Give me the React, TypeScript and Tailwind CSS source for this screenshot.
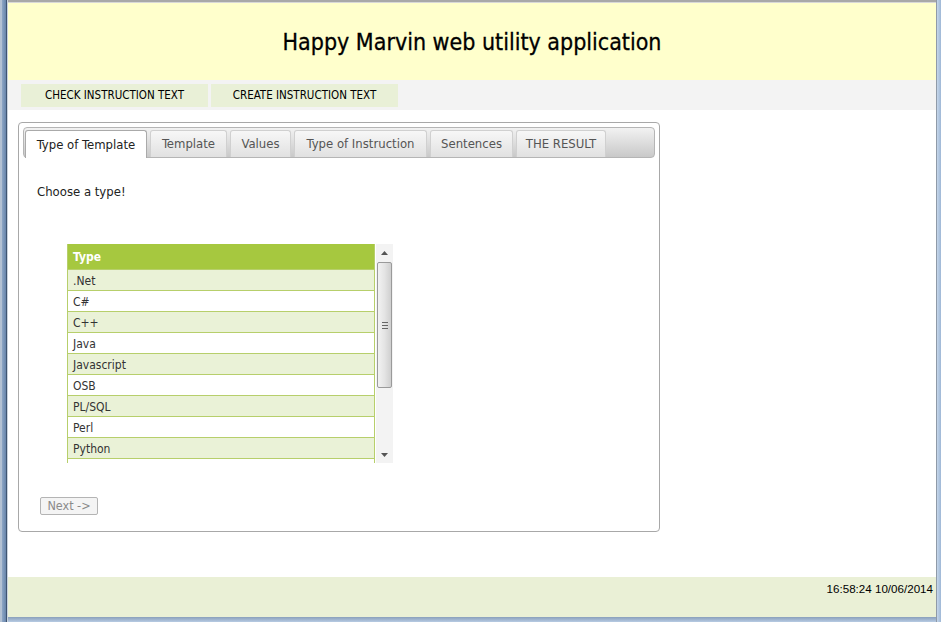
import React from "react";

const types = [".Net", "C#", "C++", "Java", "Javascript", "OSB", "PL/SQL", "Perl", "Python", ""];
const tabs: [string, string][] = [
  ["Type of Template", "w-[122px]"],
  ["Template", "w-[77px]"],
  ["Values", "w-[61px]"],
  ["Type of Instruction", "w-[133px]"],
  ["Sentences", "w-[83px]"],
  ["THE RESULT", "w-[90px]"],
];

export default function App() {
  return (
    <div className="w-[941px] h-[622px] flex overflow-hidden bg-[#a9c0dc] font-['DejaVu_Sans_Condensed','Liberation_Sans',sans-serif] text-[#222]">
      {/* left window frame */}
      <div className="w-[8px] flex">
        <div className="w-[2px] bg-[#b3c1d3]" />
        <div className="w-[4px] bg-gradient-to-r from-[#8ea7c6] to-[#6784aa]" />
        <div className="w-[1px] bg-[#3f5470]" />
        <div className="w-[1px] bg-[#c9d3df]" />
      </div>
      <div className="w-[928px] flex flex-col">
        <div className="h-[3px] bg-[#a8a8a8] border-b border-[#d8d8d8]" />
        <header className="h-[77px] bg-[#ffffcc] flex items-center justify-center text-[23px] text-black pt-[2px] [-webkit-text-stroke:0.3px_black]">
          Happy Marvin web utility application
        </header>
        <nav className="h-[30px] bg-[#f3f3f3] flex items-center pl-[13px] gap-[3px]">
          <div className="w-[187px] h-[23px] bg-[#e9f0d7] flex items-center justify-center text-[11.5px] text-black pt-[2px]">
            CHECK INSTRUCTION TEXT
          </div>
          <div className="w-[187px] h-[23px] bg-[#e9f0d7] flex items-center justify-center text-[11.5px] text-black pt-[2px]">
            CREATE INSTRUCTION TEXT
          </div>
        </nav>
        <main className="flex-1 bg-white pl-[10px] pt-[12px]">
          <div className="w-[642px] h-[410px] border border-[#a8a8a8] rounded-[4px] p-[4px] flex flex-col">
            <div className="h-[31px] rounded-[4px] border border-[#b5b5b5] bg-gradient-to-b from-[#f2f2f2] to-[#c9c9c9] flex items-end pl-[1px] gap-[3px]">
              {tabs.map(([t, w], i) =>
                i === 0 ? (
                  <div
                    key={t}
                    className={`${w} h-[28px] -mb-px bg-white border border-b-0 border-[#aaaaaa] rounded-t-[3px] flex items-center justify-center text-[13px] text-[#222]`}
                  >
                    {t}
                  </div>
                ) : (
                  <div
                    key={t}
                    className={`${w} h-[27px] bg-gradient-to-b from-[#f7f7f7] to-[#e1e1e1] border border-b-0 border-[#d0d0d0] rounded-t-[3px] flex items-center justify-center text-[13px] text-[#555]`}
                  >
                    {t}
                  </div>
                )
              )}
            </div>
            <div className="pl-[14px] pt-[26px]">
              <div className="text-[13px] leading-[16px] text-[#222]">Choose a type!</div>
              <div className="mt-[44px] ml-[30px] flex h-[219px] w-[326px] overflow-hidden">
                <div className="w-[310px] border-x border-[#b7cf6b] self-start">
                  <div className="h-[26px] bg-[#a6c83f] border-b border-[#b7cf6b] flex items-center pl-[5px] pt-px text-[12px] font-bold text-white">
                    Type
                  </div>
                  {types.map((t, i) => (
                    <div
                      key={i}
                      className={
                        i % 2 === 0
                          ? "h-[21px] bg-[#eaf2d7] border-b border-[#b7cf6b] flex items-center pl-[5px] pt-px text-[12px] text-[#333]"
                          : "h-[21px] bg-white border-b border-[#b7cf6b] flex items-center pl-[5px] pt-px text-[12px] text-[#333]"
                      }
                    >
                      {t}
                    </div>
                  ))}
                </div>
                <div className="ml-[1px] w-[17px] h-[219px] bg-[#f3f3f3] flex flex-col items-center">
                  <div className="h-[17px] w-full flex items-center justify-center">
                    <svg width="7" height="4" viewBox="0 0 7 4">
                      <path d="M0 4 L3.5 0 L7 4 Z" fill="#555" />
                    </svg>
                  </div>
                  <div className="mt-px w-[15px] h-[126px] rounded-[2px] border border-[#9a9a9a] bg-gradient-to-r from-[#f2f2f2] via-[#e4e4e4] to-[#cfcfcf] flex flex-col items-center justify-center gap-[2px]">
                    <div className="w-[6px] h-px bg-[#666]" />
                    <div className="w-[6px] h-px bg-[#666]" />
                    <div className="w-[6px] h-px bg-[#666]" />
                  </div>
                  <div className="flex-1" />
                  <div className="h-[17px] w-full flex items-center justify-center">
                    <svg width="7" height="4" viewBox="0 0 7 4">
                      <path d="M0 0 L3.5 4 L7 0 Z" fill="#555" />
                    </svg>
                  </div>
                </div>
              </div>
              <button
                disabled
                className="mt-[34px] ml-[3px] w-[58px] h-[18px] border border-[#b4b4b4] rounded-[2px] bg-[#f4f4f4] text-[12.5px] leading-none text-[#8a8a8a] flex items-center justify-center"
              >
                Next -&gt;
              </button>
            </div>
          </div>
        </main>
        <footer className="h-[40px] bg-[#eaf0d6] flex justify-end pr-[3px] pt-[3px] text-[11.6px] text-black font-['Liberation_Sans',sans-serif]">
          16:58:24 10/06/2014
        </footer>
        <div className="h-[5px] bg-gradient-to-b from-[#8aa0bb] to-[#b7cbe3]" />
      </div>
      {/* right window frame */}
      <div className="w-[5px] flex">
        <div className="w-[1px] bg-[#8f9aa8]" />
        <div className="flex-1 bg-gradient-to-r from-[#c5d6ea] to-[#9fb8d6]" />
      </div>
    </div>
  );
}
